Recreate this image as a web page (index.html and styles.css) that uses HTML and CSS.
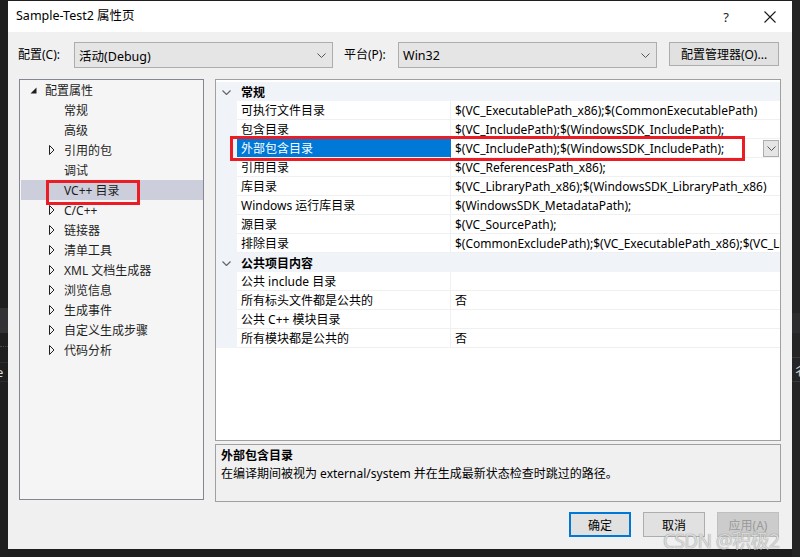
FILE: index.html
```html
<!DOCTYPE html>
<html lang="zh-CN">
<head>
<meta charset="utf-8">
<title>Sample-Test2 属性页</title>
<link rel="stylesheet" href="styles.css">
</head>
<body>
<div class="screen">
  <div class="strip-left">
    <div class="band b1"></div>
    <div class="band b2"></div>
    <div class="band b3"><span class="peek">e</span></div>
  </div>
  <div class="dialog">
    <div class="titlebar">
      <span class="title">Sample-Test2 属性页</span>
      <span class="help">?</span>
      <svg class="close" width="12" height="12" viewBox="0 0 12 12"><path d="M0.5 0.5 L11.5 11.5 M11.5 0.5 L0.5 11.5" stroke="#1a1a1a" stroke-width="1.1" fill="none"/></svg>
    </div>
    <div class="toolbar">
      <span class="lbl l1">配置(C):</span>
      <div class="combo c1"><span>活动(Debug)</span><svg width="9" height="5" viewBox="0 0 9 5"><polyline points="0.5,0.5 4.5,4.5 8.5,0.5" fill="none" stroke="#555" stroke-width="1"/></svg></div>
      <span class="lbl l2">平台(P):</span>
      <div class="combo c2"><span>Win32</span><svg width="9" height="5" viewBox="0 0 9 5"><polyline points="0.5,0.5 4.5,4.5 8.5,0.5" fill="none" stroke="#555" stroke-width="1"/></svg></div>
      <div class="btn cfgmgr">配置管理器(O)...</div>
    </div>
    <div class="content">
      <div class="tree">
        <div class="node lv0"><span class="exp"><svg width="7" height="7" viewBox="0 0 7 7"><polygon points="6.5,0.5 6.5,6.5 0.5,6.5" fill="#1e1e1e"/></svg></span>配置属性</div>
        <div class="node lv1"><span class="exp"></span>常规</div>
        <div class="node lv1"><span class="exp"></span>高级</div>
        <div class="node lv1"><span class="exp"><svg class="tri" width="6" height="10" viewBox="0 0 6 10"><polygon points="0.5,0.5 5,5 0.5,9.5" fill="none" stroke="#1e1e1e" stroke-width="1"/></svg></span>引用的包</div>
        <div class="node lv1"><span class="exp"></span>调试</div>
        <div class="node lv1 sel"><span class="exp"></span>VC++ 目录</div>
        <div class="node lv1"><span class="exp"><svg class="tri" width="6" height="10" viewBox="0 0 6 10"><polygon points="0.5,0.5 5,5 0.5,9.5" fill="none" stroke="#1e1e1e" stroke-width="1"/></svg></span>C/C++</div>
        <div class="node lv1"><span class="exp"><svg class="tri" width="6" height="10" viewBox="0 0 6 10"><polygon points="0.5,0.5 5,5 0.5,9.5" fill="none" stroke="#1e1e1e" stroke-width="1"/></svg></span>链接器</div>
        <div class="node lv1"><span class="exp"><svg class="tri" width="6" height="10" viewBox="0 0 6 10"><polygon points="0.5,0.5 5,5 0.5,9.5" fill="none" stroke="#1e1e1e" stroke-width="1"/></svg></span>清单工具</div>
        <div class="node lv1"><span class="exp"><svg class="tri" width="6" height="10" viewBox="0 0 6 10"><polygon points="0.5,0.5 5,5 0.5,9.5" fill="none" stroke="#1e1e1e" stroke-width="1"/></svg></span>XML 文档生成器</div>
        <div class="node lv1"><span class="exp"><svg class="tri" width="6" height="10" viewBox="0 0 6 10"><polygon points="0.5,0.5 5,5 0.5,9.5" fill="none" stroke="#1e1e1e" stroke-width="1"/></svg></span>浏览信息</div>
        <div class="node lv1"><span class="exp"><svg class="tri" width="6" height="10" viewBox="0 0 6 10"><polygon points="0.5,0.5 5,5 0.5,9.5" fill="none" stroke="#1e1e1e" stroke-width="1"/></svg></span>生成事件</div>
        <div class="node lv1"><span class="exp"><svg class="tri" width="6" height="10" viewBox="0 0 6 10"><polygon points="0.5,0.5 5,5 0.5,9.5" fill="none" stroke="#1e1e1e" stroke-width="1"/></svg></span>自定义生成步骤</div>
        <div class="node lv1"><span class="exp"><svg class="tri" width="6" height="10" viewBox="0 0 6 10"><polygon points="0.5,0.5 5,5 0.5,9.5" fill="none" stroke="#1e1e1e" stroke-width="1"/></svg></span>代码分析</div>
      </div>
      <div class="rightcol">
        <div class="grid">
          <div class="cat"><span class="chev"><svg width="9" height="5" viewBox="0 0 9 5"><polyline points="0.5,0.5 4.5,4.5 8.5,0.5" fill="none" stroke="#666" stroke-width="1.2"/></svg></span><span class="catname">常规</span></div>
          <div class="row"><span class="gut"></span><span class="name">可执行文件目录</span><span class="val">$(VC_ExecutablePath_x86);$(CommonExecutablePath)</span></div>
          <div class="row"><span class="gut"></span><span class="name">包含目录</span><span class="val">$(VC_IncludePath);$(WindowsSDK_IncludePath);</span></div>
          <div class="row selrow"><span class="gut"></span><span class="name">外部包含目录</span><span class="val">$(VC_IncludePath);$(WindowsSDK_IncludePath);</span><span class="ddbtn"><svg width="9" height="5" viewBox="0 0 9 5"><polyline points="0.5,0.5 4.5,4.5 8.5,0.5" fill="none" stroke="#555" stroke-width="1"/></svg></span></div>
          <div class="row"><span class="gut"></span><span class="name">引用目录</span><span class="val">$(VC_ReferencesPath_x86);</span></div>
          <div class="row"><span class="gut"></span><span class="name">库目录</span><span class="val">$(VC_LibraryPath_x86);$(WindowsSDK_LibraryPath_x86)</span></div>
          <div class="row"><span class="gut"></span><span class="name">Windows 运行库目录</span><span class="val">$(WindowsSDK_MetadataPath);</span></div>
          <div class="row"><span class="gut"></span><span class="name">源目录</span><span class="val">$(VC_SourcePath);</span></div>
          <div class="row"><span class="gut"></span><span class="name">排除目录</span><span class="val">$(CommonExcludePath);$(VC_ExecutablePath_x86);$(VC_LibraryPath_x86)</span></div>
          <div class="cat"><span class="chev"><svg width="9" height="5" viewBox="0 0 9 5"><polyline points="0.5,0.5 4.5,4.5 8.5,0.5" fill="none" stroke="#666" stroke-width="1.2"/></svg></span><span class="catname">公共项目内容</span></div>
          <div class="row"><span class="gut"></span><span class="name">公共 include 目录</span><span class="val"></span></div>
          <div class="row"><span class="gut"></span><span class="name">所有标头文件都是公共的</span><span class="val">否</span></div>
          <div class="row"><span class="gut"></span><span class="name">公共 C++ 模块目录</span><span class="val"></span></div>
          <div class="row"><span class="gut"></span><span class="name">所有模块都是公共的</span><span class="val">否</span></div>
        </div>
        <div class="desc">
          <div class="desc-title">外部包含目录</div>
          <div class="desc-text">在编译期间被视为 external/system 并在生成最新状态检查时跳过的路径。</div>
        </div>
      </div>
    </div>
    <div class="buttons">
      <div class="btn ok">确定</div>
      <div class="btn">取消</div>
      <div class="btn disabled">应用(A)</div>
    </div>
  </div>
  <div class="strip-right">
    <div class="band b1"></div>
    <div class="band b3"><span class="peek2">彳</span></div>
  </div>
  <div class="redbox r1"></div>
  <div class="redbox r2"></div>
  <div class="watermark">CSDN @积极2</div>
</div>
</body>
</html>
```
FILE: styles.css
```css
* { box-sizing: border-box; }
html, body { margin: 0; padding: 0; }
body {
  background: #1e1e1e;
  font-family: "Noto Sans", "Noto Sans CJK SC", sans-serif;
  font-size: 12px;
  color: #000;
}
.screen {
  position: relative;
  width: 800px;
  height: 557px;
  overflow: hidden;
  display: flex;
  background: #1e1e1e;
}
.strip-left, .strip-right {
  width: 8px;
  height: 557px;
  position: relative;
  background: #1f1f1f;
  overflow: hidden;
}
.strip-left .band, .strip-right .band { position: absolute; left: 0; right: 0; }
.strip-left .b1 { top: 308px; height: 25px; background: #333337; }
.strip-left .b2 { top: 346px; height: 1px; border-top: 1px dotted #4a4a4a; }
.strip-left .b3 { top: 362px; height: 20px; border-top: 1px solid #2d2d30; border-bottom: 1px solid #2d2d30; }
.peek { position: absolute; left: -4px; top: 1px; color: #d8d8d8; font-size: 13px; line-height: 16px; }
.strip-right { background: #252526; }
.strip-right .b1 { top: 313px; height: 20px; background: #2d2d30; }
.strip-right .b3 { top: 357px; height: 25px; border-top: 1px solid #3a3a3a; border-bottom: 1px solid #3a3a3a; }
.peek2 { position: absolute; left: 1px; top: 4px; color: #cfcfcf; font-size: 13px; line-height: 16px; }

.dialog {
  width: 784px;
  height: 548px;
  margin-top: 1px;
  background: #f0f0f0;
  display: flex;
  flex-direction: column;
}
.titlebar {
  height: 31px;
  background: #ffffff;
  display: flex;
  align-items: center;
  padding-left: 8px;
  flex-shrink: 0;
}
.title { font-size: 12.5px; line-height: 16px; flex: 1; color: #000; margin-top: -1px; }
.help { font-size: 13px; margin-right: 35px; color: #1a1a1a; }
.close { margin-right: 16px; }

.toolbar {
  margin-top: 10px;
  height: 26px;
  display: flex;
  align-items: flex-start;
  padding-left: 10px;
  flex-shrink: 0;
}
.lbl { height: 26px; line-height: 26px; }
.l1 { width: 56px; }
.l2 { width: 54px; margin-left: 11px; }
.combo {
  width: 259px;
  height: 26px;
  background: #e5e5e5;
  border: 1px solid #adadad;
  display: flex;
  align-items: center;
  justify-content: space-between;
  padding: 0 6px 0 4px;
  font-size: 12.5px;
}
.btn {
  height: 25px;
  width: 62px;
  background: #e1e1e1;
  border: 1px solid #adadad;
  display: flex;
  align-items: center;
  justify-content: center;
  font-size: 12px;
}
.cfgmgr { width: 110px; height: 24px; margin-left: 12px; }

.content {
  margin-top: 11px;
  height: 423px;
  display: flex;
  padding-left: 11px;
  gap: 11px;
  flex-shrink: 0;
}
.tree {
  width: 185px;
  height: 421px;
  background: #f5f5f5;
  border: 1px solid #828790;
}
.node {
  height: 20px;
  display: flex;
  align-items: center;
  white-space: nowrap;
  color: #1e1e1e;
}
.node.lv0 { padding-left: 10px; }
.node.lv1 { padding-left: 29px; }
.exp { width: 15px; height: 20px; display: flex; align-items: center; }
.node.sel { background: #cccedb; margin: 0 0 0 1px; padding-left: 28px; }

.rightcol {
  width: 566px;
  display: flex;
  flex-direction: column;
  gap: 3px;
}
.grid {
  height: 362px;
  background: #ffffff;
  border: 1px solid #a0a0a0;
  padding-top: 2px;
  overflow: hidden;
}
.cat {
  height: 19px;
  background: #f0f4f9;
  display: flex;
  align-items: center;
  padding-top: 1px;
}
.chev { width: 25px; padding-left: 6px; display: flex; align-items: center; }
.catname { font-weight: bold; }
.row {
  height: 19px;
  display: grid;
  grid-template-columns: 21px 214px 1fr;
  position: relative;
}
.gut { background: #f0f4f9; }
.name, .val {
  border-bottom: 1px solid #f0f0f0;
  padding-left: 4px;
  padding-top: 1px;
  line-height: 18px;
  white-space: nowrap;
  overflow: hidden;
}
.name { border-right: 1px solid #f0f0f0; }
.selrow .name { background: #0078d7; color: #ffffff; border-right-color: #0078d7; }
.ddbtn {
  position: absolute;
  right: 1px;
  top: 1px;
  width: 16px;
  height: 17px;
  background: #e5e5e5;
  border: 1px solid #adadad;
  display: flex;
  align-items: center;
  justify-content: center;
}
.desc {
  height: 58px;
  background: #f0f0f0;
  border: 1px solid #a0a0a0;
  padding: 2px 5px;
}
.desc-title { font-weight: bold; line-height: 18px; }
.desc-text { line-height: 18px; }

.buttons {
  margin-top: 10px;
  display: flex;
  justify-content: flex-end;
  gap: 12px;
  padding-right: 13px;
}
.btn.ok { border: 2px solid #0078d7; }
.btn.disabled { background: #cccccc; border-color: #bfbfbf; color: #9a9a9a; }

.redbox {
  position: absolute;
  border: 3px solid #ec1c24;
}
.r1 { left: 46px; top: 180px; width: 94px; height: 25px; }
.r2 { left: 230px; top: 136px; width: 515px; height: 25px; }
.watermark {
  position: absolute;
  left: 663px;
  top: 527px;
  font-size: 19px;
  letter-spacing: -0.6px;
  line-height: 28px;
  color: rgba(228, 228, 228, 0.92);
  text-shadow: 0 0 1px rgba(60, 60, 60, 0.7);
  white-space: nowrap;
}
```
